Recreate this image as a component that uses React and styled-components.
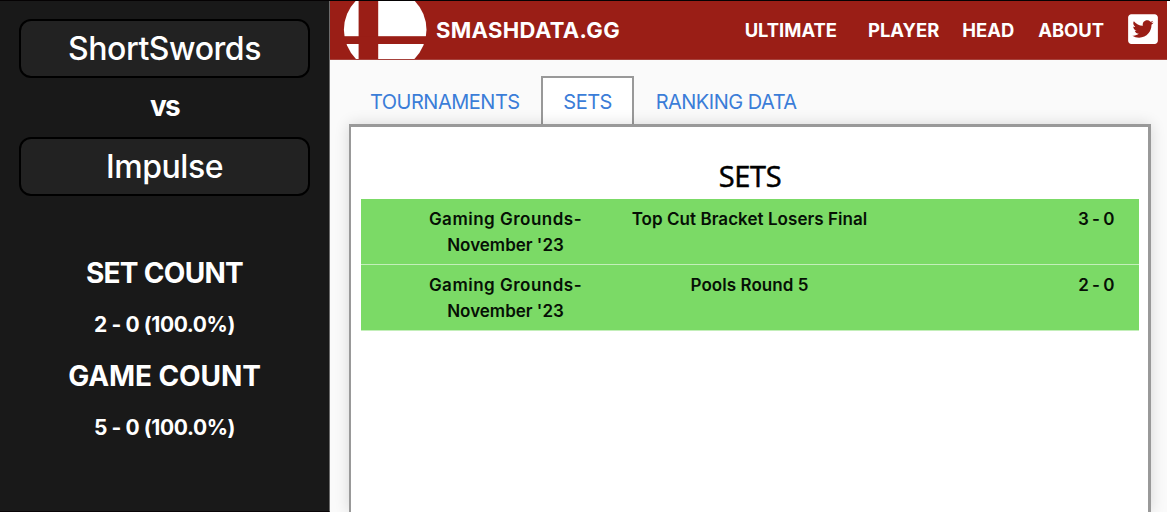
import React from "react";
import styled, { createGlobalStyle } from "styled-components";
import { FaTwitterSquare } from "react-icons/fa";

const sets = [
  {
    tournament: ["Gaming Grounds-", "November '23"],
    round: "Top Cut Bracket Losers Final",
    score: "3 - 0"
  },
  {
    tournament: ["Gaming Grounds-", "November '23"],
    round: "Pools Round 5",
    score: "2 - 0"
  }
];

const Logo = () => (
  <LogoSvg viewBox="0 0 84 58">
    <circle cx="42.2" cy="28.8" r="41.3" fill="#fff" />
    <rect x="15.6" y="0" width="19.6" height="58" fill="#9a1e16" />
    <rect x="0" y="35.2" width="84" height="7.8" fill="#9a1e16" />
  </LogoSvg>
);

const Sidebar = () => (
  <SidebarWrapper>
    <PlayerButton>ShortSwords</PlayerButton>
    <Versus>vs</Versus>
    <PlayerButton>Impulse</PlayerButton>
    <Counts>
      <CountTitle $spacing="-0.7px">SET COUNT</CountTitle>
      <CountValue>2 - 0 (100.0%)</CountValue>
      <CountTitle $spacing="-0.1px">GAME COUNT</CountTitle>
      <CountValue>5 - 0 (100.0%)</CountValue>
    </Counts>
  </SidebarWrapper>
);

const Navbar = () => (
  <Nav>
    <Logo />
    <Brand>SMASHDATA.GG</Brand>
    <NavLinks>
      <NavLink $gap="31px">ULTIMATE</NavLink>
      <NavLink $gap="23px">PLAYER</NavLink>
      <NavLink $gap="24px">HEAD</NavLink>
      <NavLink $gap="24px">ABOUT</NavLink>
      <FaTwitterSquare size={34} />
    </NavLinks>
  </Nav>
);

export default function App() {
  return (
    <Page>
      <GlobalStyle />
      <Sidebar />
      <Main>
        <Navbar />
        <Content>
          <Tabs>
            <Tab>TOURNAMENTS</Tab>
            <Tab $active>SETS</Tab>
            <Tab>RANKING DATA</Tab>
          </Tabs>
          <Panel>
            <PanelTitle>SETS</PanelTitle>
            {sets.map(set => (
              <SetRow key={set.round}>
                <Tournament>
                  <Event>{set.tournament[0]}</Event>
                  <div>{set.tournament[1]}</div>
                </Tournament>
                <Round>{set.round}</Round>
                <Score>{set.score}</Score>
              </SetRow>
            ))}
          </Panel>
        </Content>
      </Main>
    </Page>
  );
}

const GlobalStyle = createGlobalStyle`
  * {
    box-sizing: border-box;
  }

  body {
    margin: 0;
    background: #fff;
    font-family: Inter, "Liberation Sans", sans-serif;
  }
`;

const Page = styled.div`
  display: flex;
  width: 1170px;
  height: 512px;
  padding-right: 3px;
  border-top: 1px solid #050203;
  overflow: hidden;
`;

const SidebarWrapper = styled.aside`
  display: flex;
  flex-direction: column;
  flex: none;
  width: 330px;
  padding: 18px 19px 0 19px;
  background: #191919;
  border-right: 1px solid #6b6b6b;
  border-bottom: 1px solid #0a0507;
  color: #fff;
  text-align: center;
`;

const PlayerButton = styled.button`
  height: 59px;
  flex: none;
  width: 291px;
  padding: 1px 0 0;
  background: #222;
  border: 2px solid #000;
  border-radius: 12px;
  color: #fff;
  font: 500 32px/1 Inter, "Liberation Sans", sans-serif;
  letter-spacing: -0.45px;
`;

const Versus = styled.div`
  height: 59px;
  font-size: 28px;
  font-weight: 700;
  line-height: 56px;
  letter-spacing: -1.8px;
`;

const Counts = styled.div`
  padding-top: 55px;
`;

const CountTitle = styled.h2`
  margin: 0;
  font-size: 28px;
  font-weight: 700;
  line-height: 44px;
  letter-spacing: ${props => props.$spacing};
`;

const CountValue = styled.div`
  height: 58.5px;
  font-size: 21px;
  font-weight: 700;
  line-height: 59px;
  letter-spacing: -0.4px;
`;

const Main = styled.main`
  display: flex;
  flex-direction: column;
  flex: 1;
  background: #fafafa;
`;

const Nav = styled.nav`
  display: flex;
  align-items: center;
  height: 59px;
  padding: 0 9px 0 13px;
  background: #9a1e16;
  border-bottom: 1px solid #a6423c;
  color: #fff;
  font-weight: 700;
`;

const LogoSvg = styled.svg`
  width: 84px;
  height: 58px;
  flex: none;
`;

const Brand = styled.div`
  margin-left: 9px;
  font-size: 22px;
  letter-spacing: 0.35px;
`;

const NavLinks = styled.div`
  display: flex;
  align-items: center;
  margin-left: auto;
  font-size: 18.4px;

  svg {
    width: 30px;
    height: 34px;
    margin-bottom: 2px;
  }
`;

const NavLink = styled.a`
  margin-right: ${props => props.$gap};
`;

const Content = styled.div`
  display: flex;
  flex-direction: column;
  flex: 1;
  padding: 16px 16px 0 19px;
`;

const Tabs = styled.div`
  display: flex;
  height: 48px;
  margin-left: -1px;
`;

const Tab = styled.div`
  padding: 1px 19.7px 0 20px;
  border: 2px solid ${props => (props.$active ? "#999" : "transparent")};
  border-bottom: none;
  background: ${props => (props.$active ? "#fff" : "transparent")};
  color: #3b7dd8;
  font-size: 20px;
  line-height: 46px;
  letter-spacing: -0.5px;
`;

const Panel = styled.section`
  flex: 1;
  padding: 29px 9px 0 10px;
  background: #fff;
  border: solid #999;
  border-width: 3px 3px 0 2px;
  box-shadow: 0 0 14px rgba(0, 0, 0, 0.14);
`;

const PanelTitle = styled.h1`
  height: 43px;
  margin: 0;
  color: #000;
  font: 500 29px/39px "Open Sans", sans-serif;
  letter-spacing: -0.3px;
  text-align: center;
  -webkit-text-stroke: 0.5px #000;
`;

const SetRow = styled.div`
  display: grid;
  grid-template-columns: 188px 301px 1fr;
  height: 66px;
  padding: 7px 25px 0 50px;
  background: #7bda66;
  border-bottom: 1px solid #c3efb9;
  color: #061005;
  font-size: 17px;
  font-weight: 600;
  line-height: 26px;
  text-align: center;
`;

const Tournament = styled.div`
  padding-left: 1px;
  white-space: nowrap;
`;

const Event = styled.div`
  letter-spacing: 0.5px;
`;

const Round = styled.div`
  letter-spacing: 0.05px;
`;

const Score = styled.div`
  letter-spacing: -0.5px;
  text-align: right;
`;
